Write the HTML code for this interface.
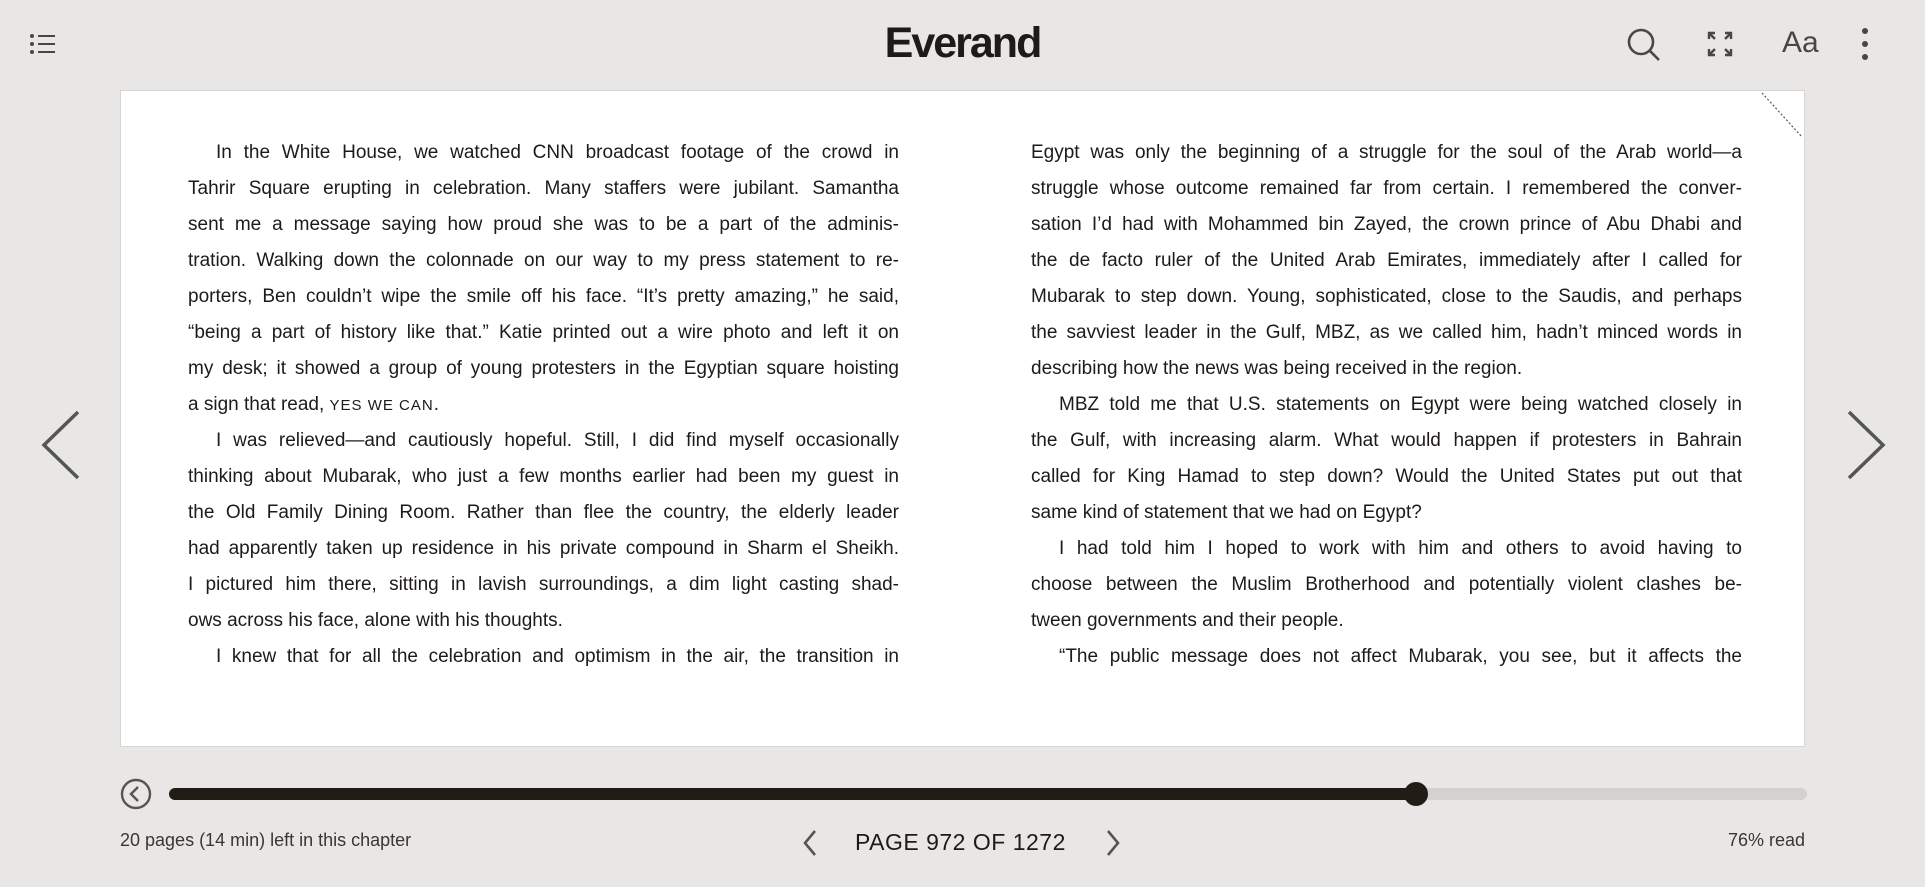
<!DOCTYPE html>
<html><head><meta charset="utf-8"><style>
*{margin:0;padding:0;box-sizing:border-box}
body{width:1925px;height:887px;background:#e8e7e5;font-family:"Liberation Sans",sans-serif;color:#1e1a17;position:relative;overflow:hidden}
.logo{position:absolute;left:0;width:1925px;top:19px;text-align:center;font-size:43px;font-weight:bold;letter-spacing:-2px;color:#1e1a17}
.page{position:absolute;left:120px;top:90px;width:1685px;height:657px;background:#fff;border:1px solid #d6d5d3}
.col{position:absolute;top:134px;width:711px;font-size:19px;line-height:36px;color:#1e1a17}
.col div{text-align:justify;text-align-last:justify;white-space:nowrap;height:36px}
.col div.l{text-align-last:left}
.col div.i{padding-left:28px}
.sc{font-size:15px;letter-spacing:1px}
.abs{position:absolute}
.bot{position:absolute;top:830px;font-size:18px;color:#3a3633}
</style></head><body>
<svg class="abs" style="left:30px;top:33px" width="26" height="22" viewBox="0 0 26 22" fill="none" stroke="#4a4643" stroke-width="2"><circle cx="2" cy="3" r="1" fill="#4a4643"/><circle cx="2" cy="11" r="1" fill="#4a4643"/><circle cx="2" cy="19" r="1" fill="#4a4643"/><path d="M8 3h17M8 11h17M8 19h17"/></svg>
<div class="logo">Everand</div>
<svg class="abs" style="left:1626px;top:27px" width="36" height="36" viewBox="0 0 36 36" fill="none" stroke="#4a4643" stroke-width="2.6"><circle cx="15" cy="15" r="12"/><path d="M24 24l9 9"/></svg>
<svg class="abs" style="left:1707px;top:31px" width="26" height="26" viewBox="0 0 26 26" fill="none" stroke="#4a4643" stroke-width="2.4"><path d="M2 8V2h6M2 2l6 6M24 8V2h-6M24 2l-6 6M2 18v6h6M2 24l6-6M24 18v6h-6M24 24l-6-6"/></svg>
<div class="abs" style="left:1782px;top:26px;font-size:30px;color:#4a4643">Aa</div>
<svg class="abs" style="left:1859px;top:27px" width="12" height="34"><circle cx="6" cy="4" r="3" fill="#4a4643"/><circle cx="6" cy="17" r="3" fill="#4a4643"/><circle cx="6" cy="30" r="3" fill="#4a4643"/></svg>
<div class="page">
<svg class="abs" style="right:0;top:0" width="50" height="50"><path d="M8 2L48 46" stroke="#555" stroke-width="1.2" stroke-dasharray="2 2"/></svg>
<div class="col" style="left:67px;top:44px">
<div class="i">In the White House, we watched CNN broadcast footage of the crowd in</div>
<div>Tahrir Square erupting in celebration. Many staffers were jubilant. Samantha</div>
<div>sent me a message saying how proud she was to be a part of the adminis-</div>
<div>tration. Walking down the colonnade on our way to my press statement to re-</div>
<div>porters, Ben couldn’t wipe the smile off his face. “It’s pretty amazing,” he said,</div>
<div>“being a part of history like that.” Katie printed out a wire photo and left it on</div>
<div>my desk; it showed a group of young protesters in the Egyptian square hoisting</div>
<div class="l">a sign that read, <span class="sc">YES WE CAN</span>.</div>
<div class="i">I was relieved—and cautiously hopeful. Still, I did find myself occasionally</div>
<div>thinking about Mubarak, who just a few months earlier had been my guest in</div>
<div>the Old Family Dining Room. Rather than flee the country, the elderly leader</div>
<div>had apparently taken up residence in his private compound in Sharm el Sheikh.</div>
<div>I pictured him there, sitting in lavish surroundings, a dim light casting shad-</div>
<div class="l">ows across his face, alone with his thoughts.</div>
<div class="i">I knew that for all the celebration and optimism in the air, the transition in</div>
</div>
<div class="col" style="left:910px;top:44px">
<div>Egypt was only the beginning of a struggle for the soul of the Arab world—a</div>
<div>struggle whose outcome remained far from certain. I remembered the conver-</div>
<div>sation I’d had with Mohammed bin Zayed, the crown prince of Abu Dhabi and</div>
<div>the de facto ruler of the United Arab Emirates, immediately after I called for</div>
<div>Mubarak to step down. Young, sophisticated, close to the Saudis, and perhaps</div>
<div>the savviest leader in the Gulf, MBZ, as we called him, hadn’t minced words in</div>
<div class="l">describing how the news was being received in the region.</div>
<div class="i">MBZ told me that U.S. statements on Egypt were being watched closely in</div>
<div>the Gulf, with increasing alarm. What would happen if protesters in Bahrain</div>
<div>called for King Hamad to step down? Would the United States put out that</div>
<div class="l">same kind of statement that we had on Egypt?</div>
<div class="i">I had told him I hoped to work with him and others to avoid having to</div>
<div>choose between the Muslim Brotherhood and potentially violent clashes be-</div>
<div class="l">tween governments and their people.</div>
<div class="i">“The public message does not affect Mubarak, you see, but it affects the</div>
</div>
</div>
<svg class="abs" style="left:38px;top:410px" width="44" height="70" fill="none" stroke="#555" stroke-width="3.5"><path d="M40 2L6 35l34 33"/></svg>
<svg class="abs" style="left:1845px;top:410px" width="44" height="70" fill="none" stroke="#555" stroke-width="3.5"><path d="M4 2l34 33L4 68"/></svg>
<svg class="abs" style="left:120px;top:778px" width="32" height="32" fill="none" stroke="#555" stroke-width="2.4"><circle cx="16" cy="16" r="14"/><path d="M18 9l-7 7 7 7"/></svg>
<div class="abs" style="left:169px;top:788px;width:1638px;height:12px;border-radius:6px;background:#d3d2d0"></div>
<div class="abs" style="left:169px;top:788px;width:1250px;height:12px;border-radius:6px;background:#221c17"></div>
<div class="abs" style="left:1404px;top:782px;width:24px;height:24px;border-radius:50%;background:#221c17"></div>
<div class="bot" style="left:120px">20 pages (14 min) left in this chapter</div>
<svg class="abs" style="left:802px;top:829px" width="16" height="28" fill="none" stroke="#555" stroke-width="2.6"><path d="M13 2L3 14l10 12"/></svg>
<div class="abs" style="left:855px;top:829px;font-size:23px;letter-spacing:0.5px;color:#1e1a17">PAGE 972 OF 1272</div>
<svg class="abs" style="left:1105px;top:829px" width="16" height="28" fill="none" stroke="#555" stroke-width="2.6"><path d="M3 2l10 12L3 26"/></svg>
<div class="bot" style="right:120px">76% read</div>
</body></html>
